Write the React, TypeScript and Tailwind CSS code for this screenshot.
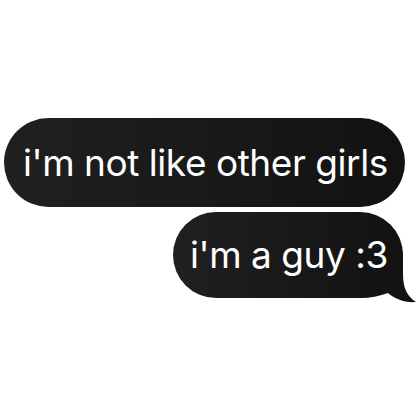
import React from "react";

function Bubble({ text, className, tail }: { text: string; className: string; tail?: boolean }) {
  return (
    <div
      className={`relative flex items-center rounded-full bg-linear-to-r from-[#202020] to-[#121212] text-white ${className}`}
    >
      <span className="relative z-10 whitespace-nowrap">{text}</span>
      {tail && (
        <svg
          className="absolute right-[-17px] bottom-[-7px]"
          width="60"
          height="55"
          viewBox="0 0 60 55"
        >
          <path
            d="M43 2 L43 24 C43 38 47 46 56 52 C45 53 35 49 28 43 C20 46 10 48 0 48 L0 2 Z"
            fill="#131313"
          />
        </svg>
      )}
    </div>
  );
}

export default function App() {
  return (
    <div
      className="w-[420px] h-[420px] bg-white flex flex-col overflow-hidden"
      style={{ fontFamily: "Inter, 'Noto Sans', sans-serif" }}
    >
      <Bubble
        text="i'm not like other girls"
        className="mt-[118px] ml-[4px] w-[401px] h-[89px] pl-[19px] text-[37px] tracking-[-0.45px]"
      />
      <Bubble
        text="i'm a guy :3"
        className="mt-[5px] ml-[173px] w-[230px] h-[86px] pl-[17px] text-[37px] tracking-[-0.45px]"
        tail
      />
    </div>
  );
}
